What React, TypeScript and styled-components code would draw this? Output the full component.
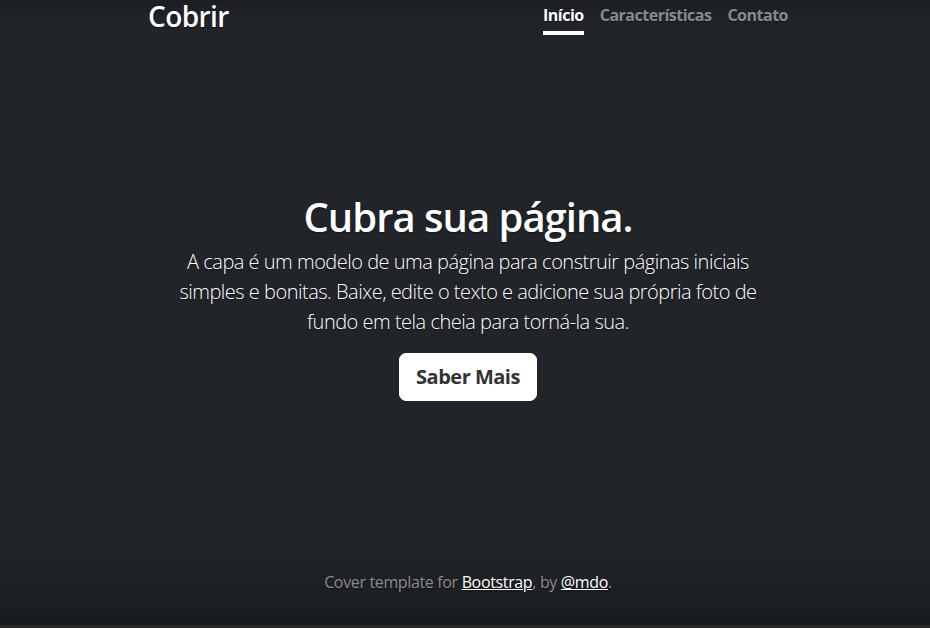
import React from "react";
import styled, { createGlobalStyle } from "styled-components";

const GlobalStyle = createGlobalStyle`
  html, body { margin: 0; padding: 0; height: 100%; }
  body {
    background: #212529;
    font-family: "Open Sans", "Noto Sans", sans-serif;
    color: #fff;
    text-shadow: 0 0.05rem 0.1rem rgba(0, 0, 0, 0.5);
  }
  * { box-sizing: border-box; }
`;

const Page = styled.div`
  height: 628px;
  display: flex;
  flex-direction: column;
  padding-left: 6px;
  background:
    linear-gradient(to bottom, rgba(0,0,0,0.18) 0px, rgba(0,0,0,0) 22px),
    linear-gradient(to top, #262829 0px, #262829 3px, rgba(0,0,0,0.25) 3px, rgba(0,0,0,0) 80px),
    #212529;
`;

const Cover = styled.div`
  width: 672px;
  margin: 0 auto;
  flex: 1;
  display: flex;
  flex-direction: column;
  padding: 0 16px 34px;
`;

const Header = styled.header`
  display: flex;
  justify-content: space-between;
  align-items: flex-start;
  margin-bottom: auto;
`;

const Brand = styled.h3`
  margin: 0;
  font-size: 28px;
  font-weight: 600;
  letter-spacing: -0.6px;
  line-height: 33.6px;
`;

const Nav = styled.nav`
  display: flex;
  gap: 16px;
`;

const NavLink = styled.a<{ $active?: boolean }>`
  display: block;
  padding: 4px 0;
  font-size: 16px;
  line-height: 24px;
  font-weight: 700;
  letter-spacing: -0.5px;
  text-decoration: none;
  color: ${(p) => (p.$active ? "#fff" : "rgba(255,255,255,0.5)")};
  border-bottom: 4px solid ${(p) => (p.$active ? "#fff" : "transparent")};
  margin-top: -1px;
`;

const Main = styled.main`
  padding: 0 16px;
  margin-top: 2px;
  text-align: center;
`;

const Title = styled.h1`
  margin: 0 0 6px;
  padding-top: 3px;
  font-size: 40px;
  font-weight: 600;
  letter-spacing: -1px;
  line-height: 48px;
`;

const Lead = styled.p`
  margin: 0 0 16px;
  font-size: 20px;
  font-weight: 300;
  letter-spacing: -0.5px;
  line-height: 30px;
`;

const Button = styled.a`
  display: inline-block;
  padding: 8px 16px;
  font-size: 20px;
  line-height: 30px;
  font-weight: 700;
  letter-spacing: -0.5px;
  color: #333;
  background: #fff;
  border: 1px solid #fff;
  border-radius: 7px;
  text-decoration: none;
  text-shadow: none;
`;

const Footer = styled.footer`
  margin-top: auto;
  text-align: center;
  font-size: 16px;
  line-height: 24px;
  letter-spacing: -0.35px;
  color: rgba(255, 255, 255, 0.5);
`;

const FooterLink = styled.a`
  color: #fff;
  text-decoration: underline;
`;

export default function App() {
  return (
    <>
      <GlobalStyle />
      <Page>
        <Cover>
          <Header>
            <Brand>Cobrir</Brand>
            <Nav>
              <NavLink $active href="#">Início</NavLink>
              <NavLink href="#">Características</NavLink>
              <NavLink href="#">Contato</NavLink>
            </Nav>
          </Header>
          <Main>
            <Title>Cubra sua página.</Title>
            <Lead>
              A capa é um modelo de uma página para construir páginas iniciais simples e bonitas. Baixe, edite o texto e adicione sua própria foto de fundo em tela cheia para torná-la sua.
            </Lead>
            <Lead>
              <Button href="#">Saber Mais</Button>
            </Lead>
          </Main>
          <Footer>
            Cover template for <FooterLink href="#">Bootstrap</FooterLink>, by <FooterLink href="#">@mdo</FooterLink>.
          </Footer>
        </Cover>
      </Page>
    </>
  );
}
